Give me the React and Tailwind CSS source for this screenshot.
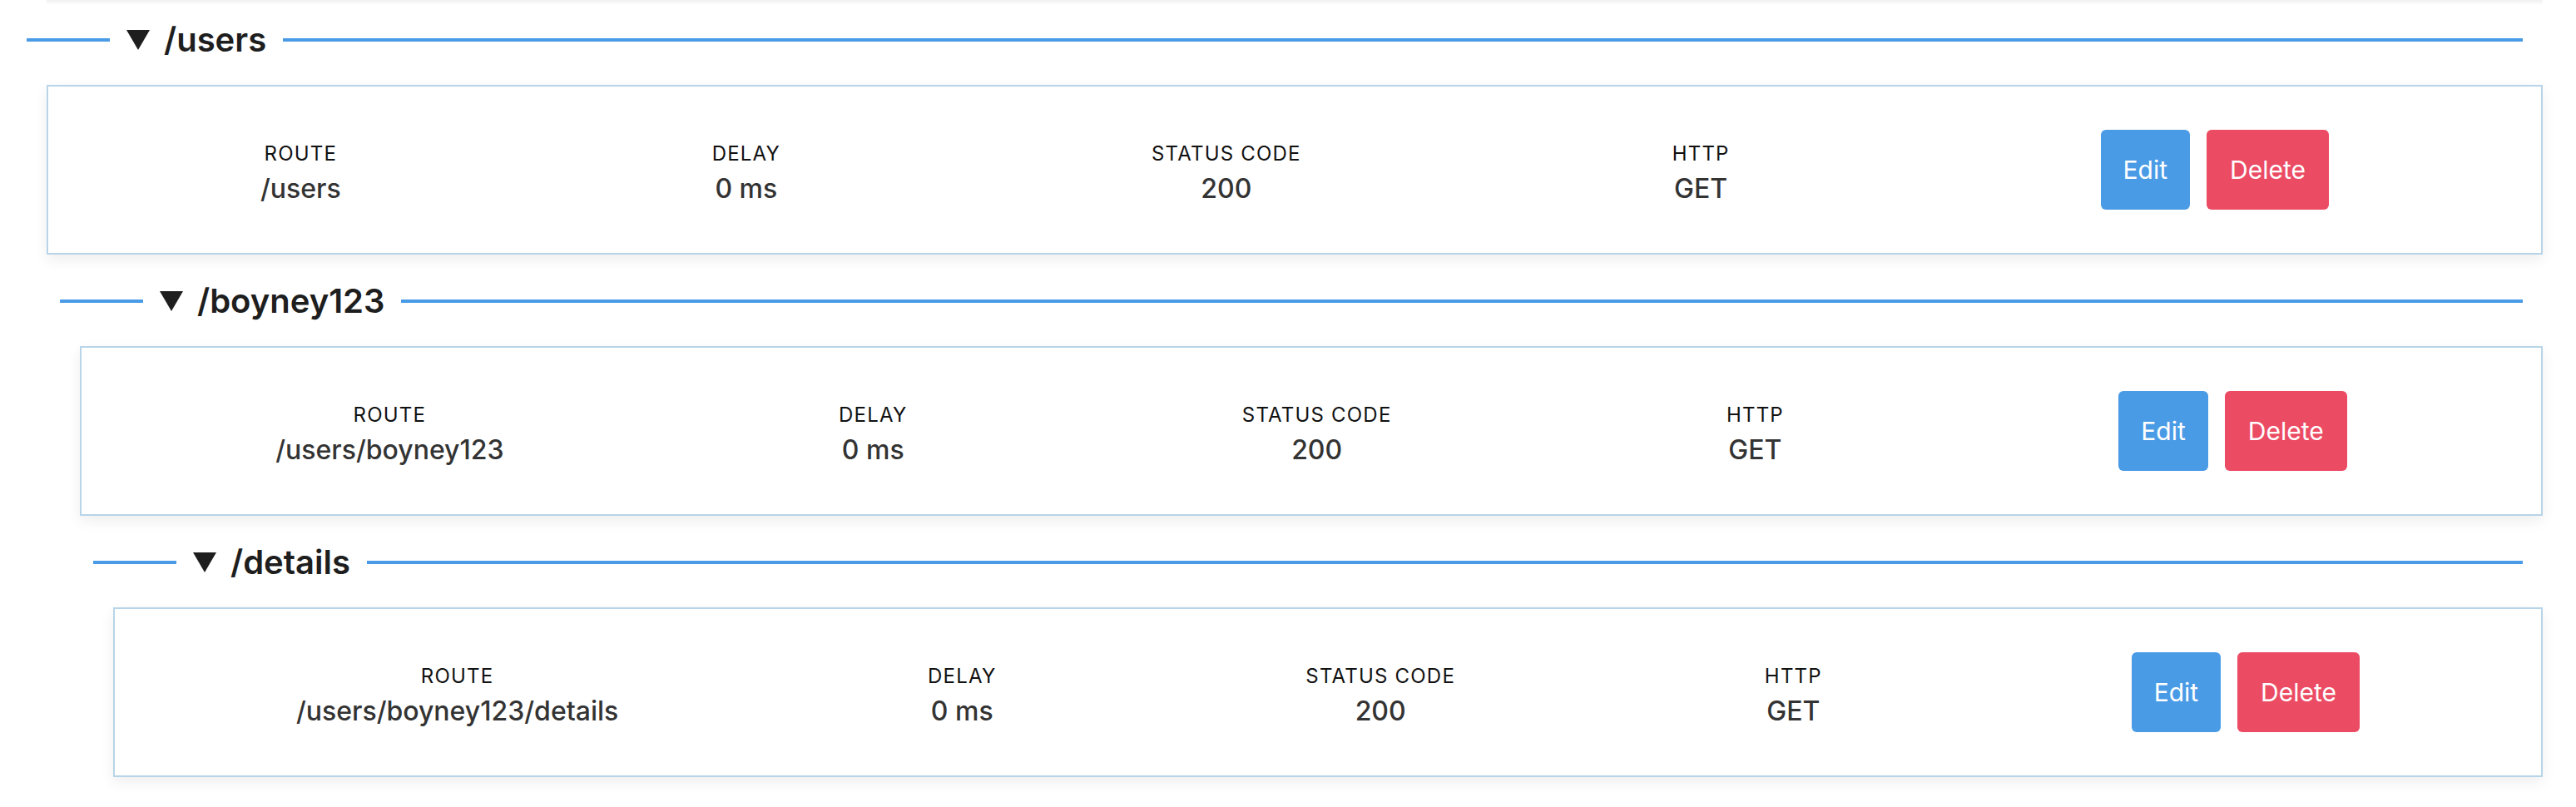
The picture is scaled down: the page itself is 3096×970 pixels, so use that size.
import React from "react";

const routes = {
  name: "/users",
  route: "/users",
  delay: "0 ms",
  status: "200",
  method: "GET",
  children: {
    name: "/boyney123",
    route: "/users/boyney123",
    delay: "0 ms",
    status: "200",
    method: "GET",
    children: {
      name: "/details",
      route: "/users/boyney123/details",
      delay: "0 ms",
      status: "200",
      method: "GET",
    },
  },
};

function Field({ label, value }) {
  return (
    <div className="flex flex-col items-center pt-[10px]">
      <span className="text-[24px] leading-[36px] tracking-[1.2px] text-[#111111]">
        {label}
      </span>
      <span className="text-[32px] leading-[48px] font-medium text-[#333333]">
        {value}
      </span>
    </div>
  );
}

function Card({ item }) {
  return (
    <div className="ml-[24px] mt-[26px] h-[204px] flex items-center justify-around px-[32px] bg-white border-2 border-[#b8d4e8] shadow-[0_6px_16px_rgba(0,0,0,0.07)]">
      <Field label="ROUTE" value={item.route} />
      <Field label="DELAY" value={item.delay} />
      <Field label="STATUS CODE" value={item.status} />
      <Field label="HTTP" value={item.method} />
      <div className="flex gap-[20px]">
        <button className="h-[96px] px-[27px] rounded-[6px] bg-[#4a9be6] text-white text-[30px]">
          Edit
        </button>
        <button className="h-[96px] px-[28px] rounded-[6px] bg-[#eb4c64] text-white text-[30px]">
          Delete
        </button>
      </div>
    </div>
  );
}

function Section({ item }) {
  return (
    <div>
      {/* heading with rule on both sides */}
      <div className="flex items-center h-[56px] mr-[24px]">
        <div className="w-[100px] h-[4px] bg-[#4a9be6]" />
        <svg className="ml-[20px]" width="28" height="24" viewBox="0 0 28 24">
          <polygon points="0,0 28,0 14,24" fill="#1e1e1e" />
        </svg>
        <span className="ml-[17px] text-[40px] leading-none font-semibold text-[#1e1e1e]">
          {item.name}
        </span>
        <div className="flex-1 ml-[20px] h-[4px] bg-[#4a9be6]" />
      </div>
      <Card item={item} />
      {item.children && (
        <div className="ml-[40px] mt-[28px]">
          <Section item={item.children} />
        </div>
      )}
    </div>
  );
}

export default function App() {
  return (
    <div className="min-h-screen bg-white font-['Inter','Liberation_Sans',sans-serif]">
      {/* bottom edge of the previous card's shadow */}
      <div className="h-[6px] ml-[56px] mr-[40px] bg-gradient-to-b from-[#f1f1f1] to-white" />
      <div className="pl-[32px] pr-[40px] pt-[14px]">
        <Section item={routes} />
      </div>
    </div>
  );
}
